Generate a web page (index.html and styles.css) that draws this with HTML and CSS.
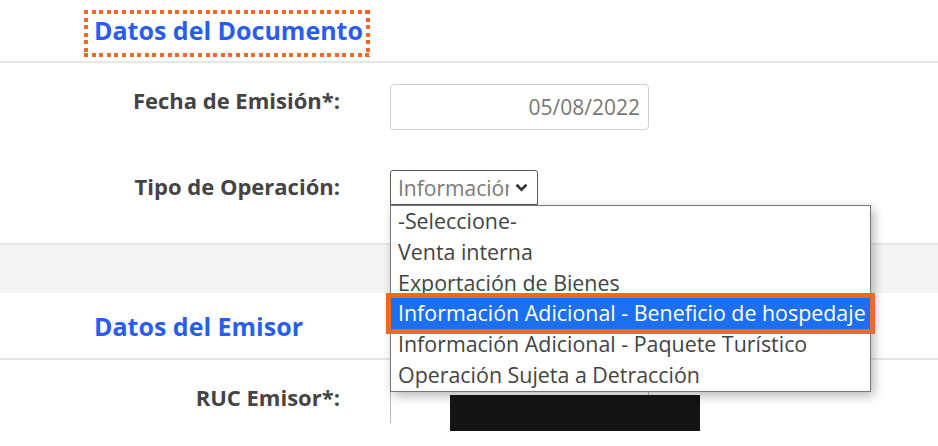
FILE: index.html
```html
<!DOCTYPE html>
<html lang="es">
<head>
<meta charset="utf-8">
<title>Datos del Documento</title>
<link rel="stylesheet" href="styles.css">
</head>
<body>
<div class="page">
  <div class="section-head first">
    <h2 class="title focused">Datos del Documento</h2>
  </div>
  <div class="row row-fecha">
    <label class="label">Fecha de Emisión*:</label>
    <div class="input date">05/08/2022</div>
  </div>
  <div class="row row-tipo">
    <label class="label">Tipo de Operación:</label>
    <div class="select-wrap">
      <div class="select">
        <span class="select-text">Información Adicional - Beneficio de hospedaje</span>
        <svg class="chev" width="13" height="9" viewBox="0 0 13 9"><polyline points="1.6,1.8 6.5,6.6 11.4,1.8" fill="none" stroke="#333" stroke-width="2.6"/></svg>
      </div>
      <ul class="options">
        <li>-Seleccione-</li>
        <li>Venta interna</li>
        <li>Exportación de Bienes</li>
        <li class="selected">Información Adicional - Beneficio de hospedaje</li>
        <li>Información Adicional - Paquete Turístico</li>
        <li>Operación Sujeta a Detracción</li>
      </ul>
    </div>
  </div>
  <div class="band"></div>
  <div class="section-head second">
    <h2 class="title">Datos del Emisor</h2>
  </div>
  <div class="row row-ruc">
    <label class="label">RUC Emisor*:</label>
    <div class="input ruc"></div>
  </div>
  <span class="redact"></span>
</div>
</body>
</html>
```
FILE: styles.css
```css
* { box-sizing: border-box; }
html, body { margin: 0; padding: 0; background: #fff; }
body {
  font-family: "Open Sans", "Noto Sans", sans-serif;
  width: 938px;
  height: 446px;
  overflow: hidden;
}
.page { position: relative; height: 423px; }
.section-head {
  display: flex;
  border-bottom: 2px solid #e6e6e6;
}
.section-head.first {
  height: 63px;
  padding-left: 84px;
  padding-top: 10px;
  align-items: flex-start;
}
.section-head.second {
  height: 67px;
  padding-left: 94px;
  align-items: center;
}
.title {
  margin: 0;
  font-size: 25px;
  font-weight: 700;
  color: #2b5cf2;
  line-height: 34px;
  white-space: nowrap;
}
.title.focused {
  position: relative;
  padding: 3px 7px 10px 10px;
}
.title.focused::before {
  content: "";
  position: absolute;
  inset: 0;
  pointer-events: none;
  background:
    repeating-linear-gradient(to right, #f26a21 0 4px, transparent 4px 7.6px) top left / 100% 4px no-repeat,
    repeating-linear-gradient(to right, #f26a21 0 4px, transparent 4px 7.6px) bottom left / 100% 4px no-repeat,
    repeating-linear-gradient(to bottom, #f26a21 0 4px, transparent 4px 7.6px) top left / 4px 100% no-repeat,
    repeating-linear-gradient(to bottom, #f26a21 0 4px, transparent 4px 7.6px) top right / 4px 100% no-repeat;
}
.row { display: flex; align-items: flex-start; }
.label {
  width: 340px;
  text-align: right;
  font-size: 22px;
  font-weight: 700;
  color: #444;
  flex-shrink: 0;
  line-height: 30px;
  margin-top: 1px;
}
.row-fecha { padding-top: 21px; height: 107px; }
.input {
  margin-left: 50px;
  width: 259px;
  height: 46px;
  border: 1px solid #cfcfcf;
  border-radius: 4px;
  font-size: 21px;
  color: #777;
  display: flex;
  align-items: center;
}
.input.date { justify-content: flex-end; padding-right: 8px; }
.row-tipo { height: 73px; }
.select-wrap { position: relative; margin-left: 50px; }
.select {
  width: 148px;
  height: 35px;
  border: 1px solid #5a5a5a;
  border-radius: 3px 3px 0 0;
  display: flex;
  align-items: center;
  padding-left: 7px;
  font-size: 21px;
  color: #7a7a7a;
  background: #fff;
}
.select-text { width: 111px; overflow: hidden; white-space: nowrap; }
.chev { margin-left: 6px; }
.options {
  position: absolute;
  left: 0;
  top: 35px;
  width: 481px;
  margin: 0;
  padding: 0;
  list-style: none;
  background: #fff;
  border: 1px solid #767676;
  box-shadow: 3px 4px 10px rgba(0,0,0,0.28);
  z-index: 5;
}
.options li {
  height: 30.8px;
  line-height: 30.8px;
  padding-left: 7px;
  font-size: 21.4px;
  color: #434343;
  white-space: nowrap;
}
.options li.selected {
  background: #1c6ff0;
  color: #fff;
  outline: 5px solid #ef6a1f;
  position: relative;
}
.band {
  height: 50px;
  background: #f4f4f4;
  border-top: 2px solid #e6e6e6;
}
.row-ruc { padding-top: 21px; height: 63px; overflow: hidden; }
.input.ruc { border-color: #bbb; }
.redact {
  position: absolute;
  left: 450px;
  top: 395px;
  width: 250px;
  height: 36px;
  background: #141414;
}
```
